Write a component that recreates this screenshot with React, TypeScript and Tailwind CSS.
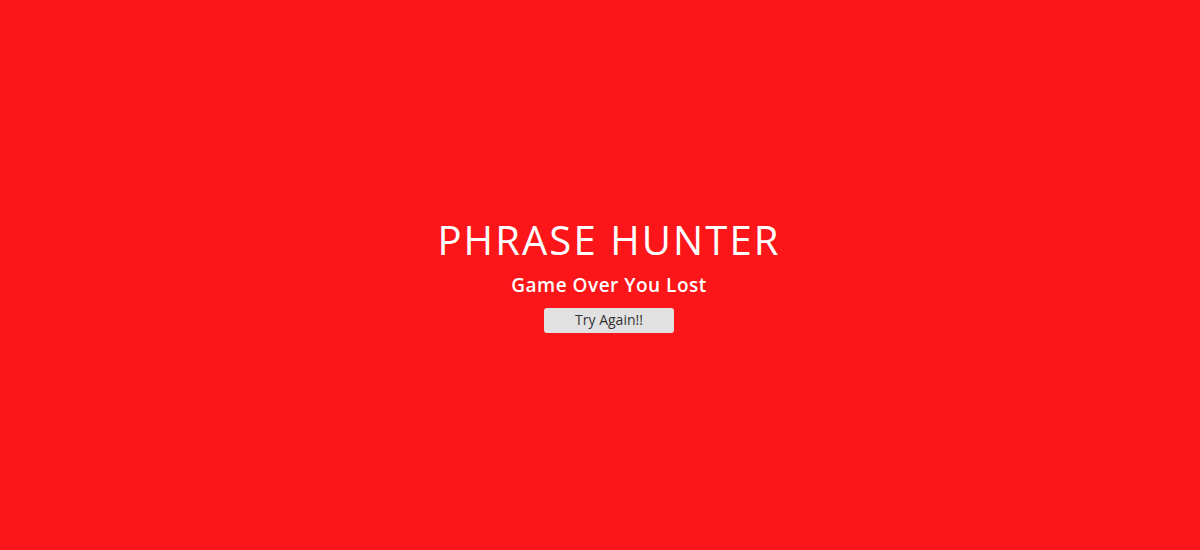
export default function App() {
  return (
    <div className="h-[550px] w-full bg-[#fc1519] flex flex-col items-center justify-center pl-[18px] pt-[3px] font-['Open_Sans',sans-serif]">
      <h1 className="text-white text-[40px] leading-[46px] tracking-[2.1px] mt-[-4px]">PHRASE HUNTER</h1>
      <h2 className="text-white text-[19px] font-semibold leading-[24px] mt-[10px] tracking-[0.5px]">Game Over You Lost</h2>
      <button className="mt-[11px] w-[130px] h-[25px] bg-[#e1e1e1] rounded-[3px] text-[#333] text-[14px] leading-none">Try Again!!</button>
    </div>
  );
}
